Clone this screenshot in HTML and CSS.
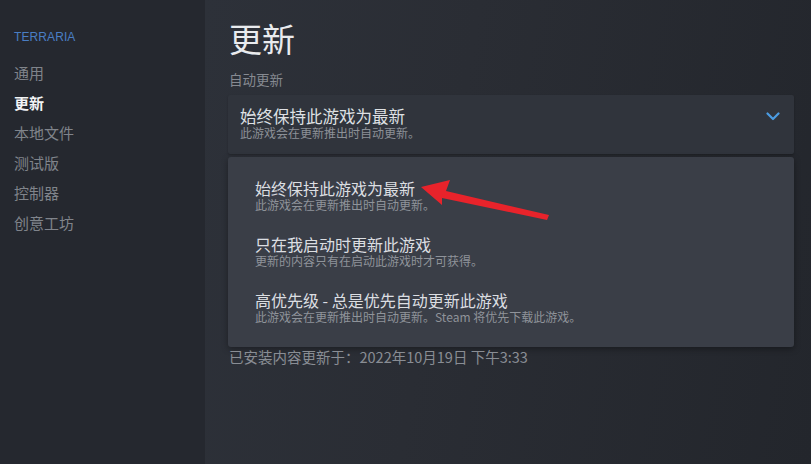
FILE: index.html
```html
<!DOCTYPE html>
<html lang="zh">
<head>
<meta charset="utf-8">
<title>更新</title>
<link rel="stylesheet" href="styles.css">
</head>
<body>
<div class="app">
  <nav class="sidebar">
    <div class="game">TERRARIA</div>
    <ul class="menu">
      <li>通用</li>
      <li class="active">更新</li>
      <li>本地文件</li>
      <li>测试版</li>
      <li>控制器</li>
      <li>创意工坊</li>
    </ul>
  </nav>
  <main class="main">
    <h1 class="title">更新</h1>
    <div class="label">自动更新</div>
    <div class="select">
      <div class="select-text">
        <div class="select-title">始终保持此游戏为最新</div>
        <div class="select-sub">此游戏会在更新推出时自动更新。</div>
      </div>
      <svg class="chevron" width="14" height="9" viewBox="0 0 14 9"><polyline points="1.5,1.5 7,7 12.5,1.5" fill="none" stroke="#4b9ce2" stroke-width="2.2" stroke-linecap="round" stroke-linejoin="round"/></svg>
    </div>
    <div class="options">
      <div class="option">
        <div class="opt-title">始终保持此游戏为最新</div>
        <div class="opt-sub">此游戏会在更新推出时自动更新。</div>
      </div>
      <div class="option">
        <div class="opt-title">只在我启动时更新此游戏</div>
        <div class="opt-sub">更新的内容只有在启动此游戏时才可获得。</div>
      </div>
      <div class="option">
        <div class="opt-title">高优先级 - 总是优先自动更新此游戏</div>
        <div class="opt-sub">此游戏会在更新推出时自动更新。Steam 将优先下载此游戏。</div>
      </div>
    </div>
    <div class="installed">已安装内容更新于：2022年10月19日 下午3:33</div>
  </main>
</div>
<svg class="annot" width="811" height="464" viewBox="0 0 811 464">
  <polygon points="421,187 450,180 446,191 549,215 547,220 442,198 442,205" fill="#e8232b"/>
</svg>
</body>
</html>
```

FILE: styles.css
```css
* { box-sizing: border-box; margin: 0; padding: 0; }
html, body {
  width: 811px;
  height: 464px;
  overflow: hidden;
  background: #23262c;
  font-family: "Noto Sans CJK SC", "Noto Sans", "Liberation Sans", sans-serif;
}
.app {
  display: flex;
  width: 811px;
  height: 464px;
}
.sidebar {
  width: 205px;
  flex: none;
  background: #25282f;
  padding: 29px 0 0 14px;
}
.game {
  font-family: "Liberation Sans", Arial, sans-serif;
  font-size: 12px;
  line-height: 16px;
  color: #4a7ec4;
  letter-spacing: 0.1px;
}
.menu {
  list-style: none;
  margin-top: 13px;
}
.menu li {
  font-size: 15px;
  line-height: 30px;
  color: #80848b;
}
.menu li.active {
  color: #f2f3f5;
  font-weight: 700;
}
.main {
  flex: 1;
  padding: 16px 17px 0 23px;
  background: linear-gradient(100deg, #2d3139 0%, #2a2d34 40%, #23262c 100%);
}
.title {
  font-size: 33px;
  font-weight: 400;
  line-height: 44px;
  color: #e9ebee;
  padding-left: 1px;
}
.label {
  margin-top: 9px;
  font-size: 13.5px;
  line-height: 20px;
  color: #868a91;
  padding-left: 1px;
}
.select {
  margin-top: 6px;
  height: 59px;
  background: #30343c;
  border-radius: 2px;
  display: flex;
  align-items: flex-start;
  justify-content: space-between;
  padding: 11px 14px 0 12px;
  box-shadow: 0 1px 2px rgba(0,0,0,0.25);
}
.select-title {
  font-size: 16.5px;
  line-height: 20px;
  color: #dfe1e4;
}
.select-sub {
  font-size: 12px;
  line-height: 14px;
  color: #8c9097;
}
.chevron {
  margin-top: 6px;
}
.options {
  margin-top: 3px;
  height: 190px;
  background: #3a3e47;
  border-radius: 3px;
  padding: 21px 27px 0 27px;
  display: flex;
  flex-direction: column;
  gap: 22px;
  box-shadow: 0 2px 6px rgba(0,0,0,0.35);
}
.opt-title {
  font-size: 16px;
  line-height: 20px;
  color: #dcdee2;
}
.opt-sub {
  font-size: 12px;
  line-height: 14px;
  color: #8f939a;
}
.installed {
  margin-top: 1px;
  font-size: 14.5px;
  line-height: 18px;
  color: #898d94;
  padding-left: 1px;
}
.annot {
  position: absolute;
  top: 0;
  left: 0;
  pointer-events: none;
}
```
